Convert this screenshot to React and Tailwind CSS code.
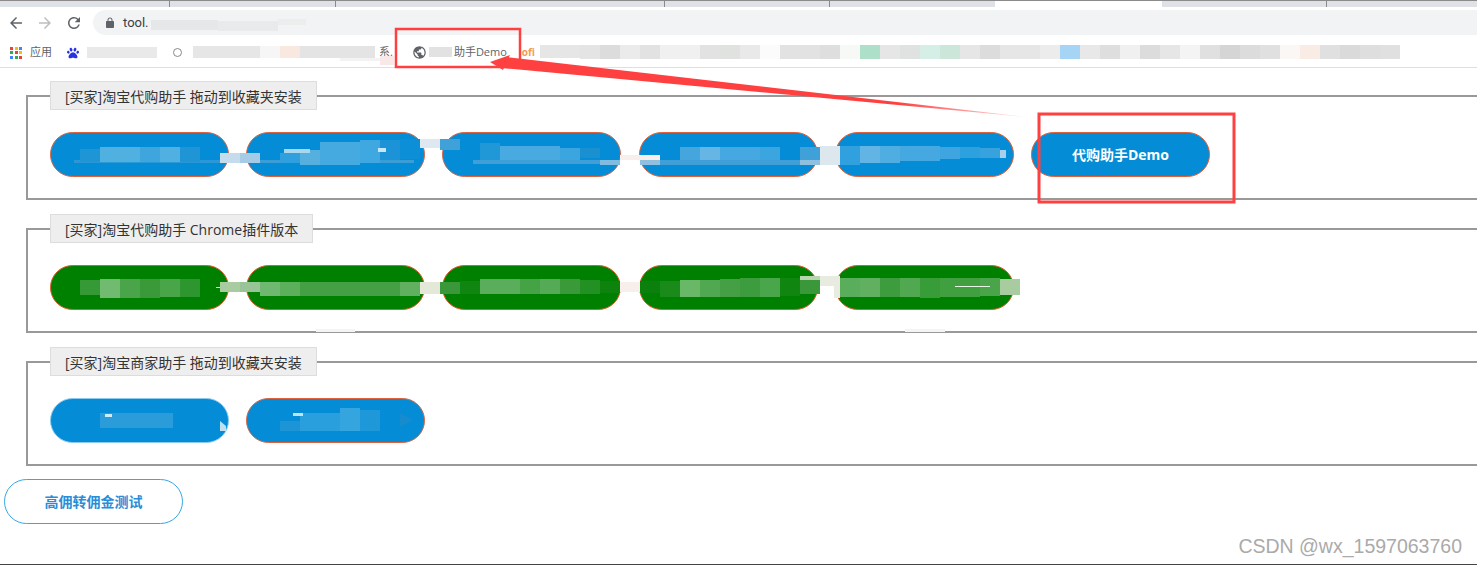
import React from 'react';
import { FaPaw } from 'react-icons/fa';

const cjk = "font-['Open_Sans','Noto_Sans_CJK_SC',sans-serif]";

const BLUE_BTN = 'h-[45px] w-[179px] rounded-full border border-[#e2603a] bg-[#048dd6] text-sm font-bold text-white';
const GREEN_BTN = 'h-[45px] w-[179px] rounded-full border border-[#d8602a] bg-[#008000] text-sm font-bold text-white';

// bookmark bar smear, 20px cells starting at x=580
const barCells = ['e4e4e4','dcdcdc','ebebeb','e2e2e2','f0f0f0','f0f0f0','e2e2e2','e0e2e0','e9e9e9','fbfbfb','e2e2e2','e2e2e2','dedede','f7f9f7','addfc9','e6e6e6','e0e2e2','d5efe6','cce6da','e6e6e6','dcdcdc','e6e6e6','e6e6e6','ececec','a5d4f5','e8e8e8','dedede','f0f0f0','dcdcdc','e6e6e6','f4f4f4','e0e0e0','d5d5d5','dcdcdc','e0e0e0','faf7f5','f8ece4','e0e0e0','dadada','dedede','e0e0e0'];

// x, y, w, h, colour of each mosaic block
const blocks = [
  // address bar and left bookmarks
  [151, 20, 67, 10, '#e6e7e9'], [218, 21, 60, 10, '#e9eaec'], [278, 19, 28, 6, '#eceded'],
  [87, 47, 70, 11, '#e9e9e9'], [193, 46, 67, 12, '#e6e6e6'], [260, 46, 20, 12, '#f6f6f6'], [280, 46, 20, 12, '#f8e8e0'], [300, 46, 75, 12, '#e4e4e4'],
  [340, 58, 40, 3, '#f3f3f3'], [380, 56, 14, 9, '#f8e8e8'],
  [429, 47, 23, 10, '#e2e2e2'], [540, 45, 40, 13, '#e6e6e6'],
  // blue row
  [74, 160, 146, 3, '#2a98d6'], [80, 149, 20, 13, '#1e96d6'], [100, 147, 40, 15, '#50b0e0'], [140, 147, 20, 15, '#3ea6dd'], [160, 147, 20, 15, '#50b0e2'], [180, 147, 20, 15, '#1f95d6'],
  [220, 153, 20, 10, '#c5dcec'], [240, 153, 20, 10, '#a5cbe6'], [260, 160, 154, 3, '#3a9dd6'],
  [280, 153, 20, 10, '#2f9fdd'], [300, 150, 20, 15, '#55b0e0'], [320, 142, 40, 23, '#45aae0'], [360, 140, 20, 23, '#40a8e0'], [380, 140, 20, 20, '#1b93d6'], [400, 139, 20, 20, '#0d8fd8'],
  [420, 139, 20, 9, '#dfe8f0'], [440, 139, 20, 11, '#40a0d8'],
  [480, 143, 20, 17, '#2098d8'], [500, 146, 60, 14, '#48aae0'], [560, 148, 20, 12, '#3aa5df'], [580, 148, 20, 10, '#1b90d0'], [473, 160, 127, 4, '#3f9fd6'],
  [600, 160, 20, 5, '#80bce0'], [620, 155, 40, 5, '#f8efec'], [640, 160, 20, 5, '#90c0e0'], [660, 160, 140, 5, '#3f9fd6'],
  [680, 147, 20, 13, '#45a5dd'], [700, 147, 20, 13, '#65b5e5'], [720, 147, 40, 13, '#45a8e0'], [760, 147, 20, 13, '#3aa5df'],
  [800, 147, 20, 13, '#40a0d8'], [800, 160, 20, 5, '#90c0e0'], [820, 146, 20, 19, '#dde7ee'], [840, 146, 20, 19, '#30a0de'], [860, 146, 20, 17, '#62b4e4'], [880, 146, 20, 17, '#50ade2'],
  [900, 146, 40, 15, '#45a8e0'], [940, 147, 20, 12, '#3ea5e0'], [960, 147, 20, 11, '#2da0de'], [980, 148, 20, 10, '#38a2de'], [1000, 150, 6, 8, '#a8d0ea'],
  [284, 149, 26, 4, '#a8d8f0'], [378, 148, 8, 4, '#c8e6f6'],
  // green row
  [80, 280, 20, 15, '#359a35'], [100, 279, 20, 19, '#70bb70'], [120, 279, 20, 19, '#4aa54a'], [140, 279, 20, 19, '#3a9a3a'], [160, 279, 20, 18, '#48a548'], [180, 279, 20, 18, '#2e962e'],
  [220, 282, 20, 10, '#a8cca0'], [240, 282, 20, 10, '#98c498'], [260, 282, 20, 14, '#6fb86f'], [280, 282, 20, 14, '#5cb05c'], [300, 282, 100, 14, '#45a045'], [400, 282, 20, 14, '#60b060'],
  [420, 282, 20, 12, '#e4e8d8'], [440, 282, 20, 12, '#3a983a'], [460, 281, 20, 13, '#108510'], [480, 279, 40, 15, '#5aad5a'], [520, 279, 20, 15, '#45a345'], [540, 279, 20, 15, '#55aa55'], [560, 279, 20, 15, '#3a9a3a'], [580, 280, 20, 14, '#229022'], [600, 281, 20, 12, '#0d820d'],
  [620, 282, 20, 10, '#f8efec'], [640, 281, 20, 12, '#0c800c'], [660, 281, 20, 16, '#1a8a1a'], [680, 280, 20, 17, '#68b868'], [700, 280, 20, 17, '#50a850'], [720, 279, 20, 18, '#45a045'], [740, 278, 20, 19, '#3d9c3d'], [760, 278, 20, 19, '#4aa64a'], [780, 278, 20, 18, '#108510'],
  [800, 280, 20, 14, '#3a983a'], [800, 276, 20, 4, '#b8d4b0'], [820, 276, 20, 10, '#e8ece0'], [834, 286, 6, 12, '#e8ece0'], [840, 278, 20, 19, '#5aad5a'], [860, 278, 20, 19, '#60b060'], [880, 278, 20, 19, '#3d9c3d'], [900, 278, 20, 19, '#50a850'], [920, 278, 20, 20, '#389c38'], [940, 278, 40, 19, '#40a040'], [980, 278, 20, 18, '#4aa54a'], [1000, 279, 20, 16, '#a8cca0'],
  [955, 286, 35, 1, '#e8f4e8'], [216, 287, 4, 1, '#d0e8d0'],
  // bottom border flecks
  [316, 329, 39, 3, '#f4f4f4'], [905, 329, 40, 3, '#f4f4f4'],
  // third row
  [100, 413, 73, 15, '#2a9cd9'], [105, 414, 7, 3, '#d0eaf8'], [280, 421, 20, 10, '#1c94d6'], [300, 413, 40, 18, '#2a9fdd'], [340, 408, 20, 23, '#35a5e0'], [360, 410, 20, 21, '#1f98da'], [293, 413, 10, 3, '#c0e2f5'],
];

function Chevron({ d, className }) {
  return (
    <svg viewBox="0 0 24 24" className={className} fill="currentColor">
      <path d={d} />
    </svg>
  );
}

function AppsGrid() {
  const colors = ['bg-[#ea4335]', 'bg-[#fbbc05]', 'bg-[#4285f4]', 'bg-[#34a853]', 'bg-[#ea4335]', 'bg-[#fbbc05]', 'bg-[#4285f4]', 'bg-[#34a853]', 'bg-[#ea4335]'];
  return (
    <div className="grid h-3 w-3 grid-cols-3 gap-[1.5px]">
      {colors.map((c, i) => <span key={i} className={c} />)}
    </div>
  );
}

function Browser() {
  return (
    <div className="border-b border-[#dfdfdf]">
      <div className="flex h-[7px] border-t border-[#8a8a8a] bg-[#dee1e6]">
        <div className="w-[170px] border-r border-[#8a8a8a]" />
        <div className="w-[166px] border-r border-[#8a8a8a]" />
        <div className="w-[329px] border-r border-[#8a8a8a]" />
        <div className="w-[165px] border-r border-[#8a8a8a]" />
        <div className="w-[165px] rounded-br-md" />
        <div className="w-[167px] bg-white" />
        <div className="w-[165px] rounded-bl-md border-r border-[#8a8a8a]" />
        <div className="flex-1" />
      </div>
      <div className="flex h-[31px] items-center pl-[7px]">
        <div className="flex gap-[11px]">
          <Chevron className="h-[18px] w-[18px] text-[#5f6368]" d="M20 11H7.83l5.59-5.59L12 4l-8 8 8 8 1.41-1.41L7.83 13H20v-2z" />
          <Chevron className="h-[18px] w-[18px] text-[#bcbec0]" d="M12 4l-1.41 1.41L16.17 11H4v2h12.17l-5.58 5.59L12 20l8-8z" />
          <Chevron className="h-[18px] w-[18px] text-[#5f6368]" d="M17.65 6.35A7.958 7.958 0 0 0 12 4c-4.42 0-7.99 3.58-7.99 8s3.57 8 7.99 8c3.73 0 6.84-2.55 7.73-6h-2.08A5.99 5.99 0 0 1 12 18c-3.31 0-6-2.69-6-6s2.69-6 6-6c1.66 0 3.14.69 4.22 1.78L13 11h7V4l-2.35 2.35z" />
        </div>
        <div className="ml-[10px] flex h-[25px] flex-1 items-center gap-[7px] rounded-l-full bg-[#f1f3f4] pl-[11px]">
          <Chevron className="h-3 w-3 text-[#5f6368]" d="M18 8h-1V6c0-2.76-2.24-5-5-5S7 3.24 7 6v2H6c-1.1 0-2 .9-2 2v10c0 1.1.9 2 2 2h12c1.1 0 2-.9 2-2V10c0-1.1-.9-2-2-2zM9 6c0-1.66 1.34-3 3-3s3 1.34 3 3v2H9V6z" />
          <span className="font-['Roboto',sans-serif] text-[13px] text-[#3c4043]">tool.</span>
        </div>
      </div>
      <div className={`flex h-[29px] items-center pl-[10px] text-[11px] text-[#5f6368] ${cjk}`}>
        <AppsGrid />
        <span className="ml-2">应用</span>
        <FaPaw className="ml-[15px] h-3 w-3 text-[#2932e1]" />
        <span className="ml-[94px] h-[9px] w-[9px] rounded-full border border-[#888]" />
        <span className="ml-[197px]">系.</span>
        <Chevron className="ml-[19px] h-[15px] w-[15px] text-[#5f6368]" d="M12 2C6.48 2 2 6.48 2 12s4.48 10 10 10 10-4.48 10-10S17.52 2 12 2zm-1 17.93c-3.95-.49-7-3.85-7-7.93 0-.62.08-1.21.21-1.79L9 15v1c0 1.1.9 2 2 2v1.93zm6.9-2.54c-.26-.81-1-1.39-1.9-1.39h-1v-3c0-.55-.45-1-1-1H8v-2h2c.55 0 1-.45 1-1V7h2c1.1 0 2-.9 2-2v-.41c2.93 1.19 5 4.06 5 7.41 0 2.08-.8 3.97-2.1 5.39z" />
        <span className="ml-[27px]">助手Demo</span>
        <span className="ml-[15px] text-[10px] font-bold text-[#f59a50]">ofi</span>
      </div>
    </div>
  );
}

function Group({ title, children }) {
  return (
    <fieldset className="ml-[26px] w-[1470px] border-2 border-[#999] pb-[21px] pl-[22px]">
      <legend className="h-[29px] border border-[#ddd] bg-[#eee] px-[14px] text-sm leading-[29px] text-[#333]">{title}</legend>
      <div className="mt-[22px] flex gap-[17.2px]">{children}</div>
    </fieldset>
  );
}

// annotations and redaction mosaic lying on top of the page
function Overlay() {
  return (
    <svg className="pointer-events-none absolute inset-0" width="1477" height="565" viewBox="0 0 1477 565">
      <defs>
        <linearGradient id="fade" x1="500" x2="1030" y1="0" y2="0" gradientUnits="userSpaceOnUse">
          <stop offset="0.75" stopColor="#ff4040" />
          <stop offset="1" stopColor="#ff4040" stopOpacity="0.1" />
        </linearGradient>
      </defs>
      {barCells.map((c, i) => (
        <rect key={i} x={580 + i * 20} y="45" width="20" height="14" fill={`#${c}`} />
      ))}
      {blocks.map(([x, y, w, h, c], i) => (
        <rect key={i} x={x} y={y} width={w} height={h} fill={c} />
      ))}
      <polygon points="220,421 226,426 226,431 220,431" fill="#bfe0f0" />
      <polygon points="400,413 413,420 400,427" fill="#168cce" />
      <rect x="396" y="29" width="124" height="38" fill="none" stroke="#ff4040" strokeWidth="2.5" />
      <rect x="1039" y="114" width="195" height="88" fill="none" stroke="#ff4040" strokeWidth="3" />
      <polygon points="505,57 503,68 1027,117" fill="url(#fade)" />
      <polygon points="490,62 510,55 503,70" fill="#ff4040" />
    </svg>
  );
}

export default function App() {
  return (
    <div className={`relative flex h-[565px] w-[1477px] flex-col overflow-hidden bg-white ${cjk}`}>
      <Browser />
      <div className="mt-[13px] flex flex-col gap-[14px]">
        <Group title="[买家]淘宝代购助手 拖动到收藏夹安装">
          <button className={BLUE_BTN} />
          <button className={BLUE_BTN} />
          <button className={BLUE_BTN} />
          <button className={BLUE_BTN} />
          <button className={BLUE_BTN} />
          <button className={BLUE_BTN}>代购助手Demo</button>
        </Group>
        <Group title="[买家]淘宝代购助手 Chrome插件版本">
          <button className={GREEN_BTN} />
          <button className={GREEN_BTN} />
          <button className={GREEN_BTN} />
          <button className={GREEN_BTN} />
          <button className={GREEN_BTN} />
        </Group>
        <Group title="[买家]淘宝商家助手 拖动到收藏夹安装">
          <button className="h-[45px] w-[179px] rounded-full border border-[#8ccbee] bg-[#048dd6]" />
          <button className={BLUE_BTN} />
        </Group>
      </div>
      <button className="ml-1 mt-[13px] h-[45px] w-[179px] rounded-full border border-[#3aa6e2] bg-white text-sm font-bold leading-[41px] text-[#2a8dd8]">
        高佣转佣金测试
      </button>
      <div className="mt-auto flex justify-end pr-[15px] font-['Liberation_Sans',sans-serif] text-[19.5px] leading-[24px] text-[#aaa]">
        CSDN @wx_1597063760
      </div>
      <div className="mt-[6px] h-px bg-[#444]" />
      <Overlay />
    </div>
  );
}
